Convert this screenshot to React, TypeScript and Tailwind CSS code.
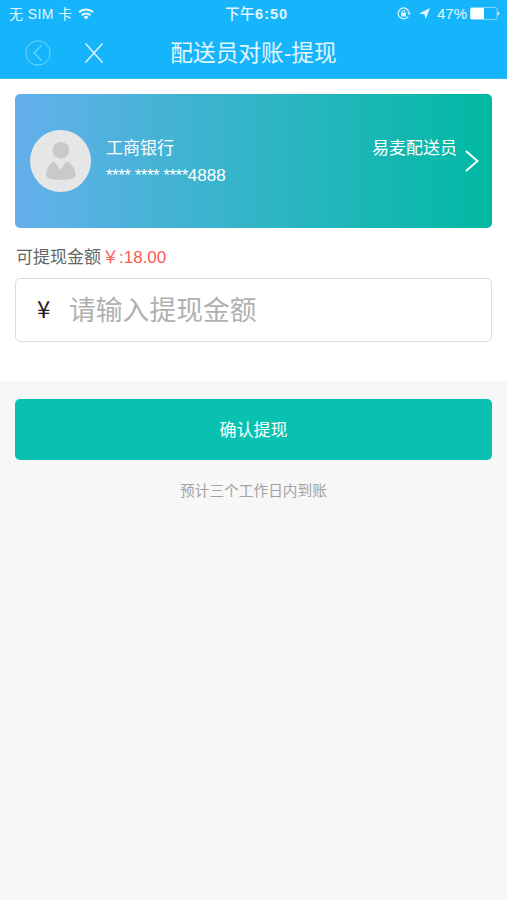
const FONT = "font-['Liberation_Sans','Noto_Sans_CJK_SC',sans-serif]";

function WifiIcon() {
  return (
    <svg width="16" height="12" viewBox="0 0 16 12" fill="none" stroke="currentColor" strokeWidth="2">
      <path d="M1 4.3a10 10 0 0 1 14 0" />
      <path d="M3.6 7.2a6.3 6.3 0 0 1 8.8 0" />
      <path d="M8 11.6 5.4 9a3.6 3.6 0 0 1 5.2 0Z" fill="currentColor" stroke="none" />
    </svg>
  );
}

function LockIcon() {
  return (
    <svg width="14" height="13" viewBox="0 0 14 13" fill="none" stroke="currentColor">
      <path d="M11.2 9.2a5.4 5.4 0 1 1 .6-4.2" strokeWidth="1.2" />
      <path d="M10.2 5.5h3.6L12.1 8.2Z" fill="currentColor" stroke="none" />
      <rect x="4" y="5.7" width="5" height="3.8" rx="0.4" fill="currentColor" stroke="none" />
      <path d="M5.1 6V4.8a1.4 1.4 0 0 1 2.8 0V6" strokeWidth="1" />
    </svg>
  );
}

function LocationIcon() {
  return (
    <svg width="11" height="11" viewBox="0 0 11 11" fill="currentColor">
      <path d="M11 0 6.8 11 5.4 6.2 0 5.600Z" />
    </svg>
  );
}

function BatteryIcon() {
  return (
    <svg width="30" height="13" viewBox="0 0 30 13">
      <rect x="0.5" y="0.5" width="26.5" height="12" rx="1.5" fill="none" stroke="white" strokeOpacity="0.45" />
      <rect x="0.5" y="1" width="13.5" height="11" rx="0.8" fill="white" />
      <path d="M27.8 4.5c2 .4 2 3.6 0 4Z" fill="white" />
    </svg>
  );
}

function Avatar() {
  return (
    <svg width="61" height="62" viewBox="0 0 61 62" className="shrink-0">
      <ellipse cx="30.5" cy="31" rx="30.5" ry="31" fill="#e6e6e6" />
      <circle cx="30.8" cy="20.3" r="8.4" fill="#c9c9c9" />
      <path
        d="M24.5 31.5 30.6 40l5.5-8.5c5.5 1.6 9 6.7 9.6 13.2 0 3.6-4.2 5-14.9 5s-14.7-1.4-14.7-5c.4-6.5 3.7-11.6 8.400-13.200Z"
        fill="#c9c9c9"
      />
    </svg>
  );
}

function StatusBar() {
  return (
    <div className="flex h-[27px] items-center justify-between pl-[9px] pr-[7px] text-[#e3f6ff]">
      <div className="flex flex-1 items-center gap-[6px] text-[14px]">
        <span className="pt-px tracking-[0.4px]">无 SIM 卡</span>
        <WifiIcon />
      </div>
      <span className="pl-1 pt-[2px] text-[14.5px] font-medium tracking-[0.6px]">
        下午<span className="font-bold tracking-[1px]">6:50</span>
      </span>
      <div className="flex flex-1 items-center justify-end">
        <LockIcon />
        <span className="ml-2 mr-[7px]">
          <LocationIcon />
        </span>
        <span className="mr-[3px] pt-px text-[15px]">47%</span>
        <BatteryIcon />
      </div>
    </div>
  );
}

function NavBar() {
  return (
    <div className="grid h-[52px] grid-cols-[1fr_auto_1fr] items-center border-b border-[#3cc0fb] text-[#e3f6ff]">
      <div className="flex items-center gap-[34px] pl-[25px]">
        <svg width="26" height="26" viewBox="0 0 26 26" fill="none" stroke="#74d4fd">
          <circle cx="13" cy="13" r="12.2" />
          <path d="M16.5 5.5 9 13l7.5 7.5" strokeWidth="1.2" />
        </svg>
        <svg width="18" height="20" viewBox="0 0 18 20" fill="none" stroke="currentColor" strokeWidth="1.4">
          <path d="m.5.5 17 19M17.5.5.5 19.5" />
        </svg>
      </div>
      <h1 className="pt-[2px] text-[22.7px]">配送员对账-提现</h1>
      <div />
    </div>
  );
}

function BankCard() {
  return (
    <div className="flex h-[134px] items-center rounded-[5px] bg-[linear-gradient(90deg,#64b0ec_0%,#00b9a2_100%)] pl-[15px] pr-[13px] text-white">
      <Avatar />
      <div className="ml-[15px] flex-1 pt-[2px] text-[17px] leading-[27px]">
        <div className="flex justify-between">
          <span>工商银行</span>
          <span>易麦配送员</span>
        </div>
        <div>
          <span className="tracking-[-0.5px]">**** **** ****</span>4888
        </div>
      </div>
      <svg width="14" height="22" viewBox="0 0 14 22" fill="none" stroke="currentColor" strokeWidth="2" strokeLinecap="round" className="ml-2 shrink-0">
        <path d="m1.5 1.5 11 9.5-11 9.5" />
      </svg>
    </div>
  );
}

export default function App() {
  return (
    <div className={`min-h-screen bg-[#f7f7f7] ${FONT}`}>
      <header className="bg-[#16b5fb]">
        <StatusBar />
        <NavBar />
      </header>

      <section className="h-[302px] bg-white px-[15px] pt-[15px]">
        <BankCard />
        <p className="mt-4 h-[25px] pl-px text-[17px] leading-[27px] text-[#666]">
          可提现金额<span className="ml-px text-[#fb5a55]">￥:18.00</span>
        </p>
        <label className="mt-[9px] flex h-[64px] items-center rounded-[5px] border border-[#dcdcdc] pl-[21px]">
          <span className="mt-[-4px] w-[32px] font-['Noto_Sans_CJK_SC'] text-[24px] text-[#222]">¥</span>
          <input
            className="flex-1 pt-[2px] text-[26.8px] outline-none placeholder:text-[#b0b0b0]"
            placeholder="请输入提现金额"
          />
        </label>
      </section>

      <section className="px-[15px] pt-[18px]">
        <button className="h-[61px] w-full rounded-[5px] bg-[#08c1b0] pt-[2px] text-[17px] text-white">确认提现</button>
        <p className="mt-5 text-center text-[14.7px] leading-[22px] text-[#a3a3a3]">预计三个工作日内到账</p>
      </section>
    </div>
  );
}
